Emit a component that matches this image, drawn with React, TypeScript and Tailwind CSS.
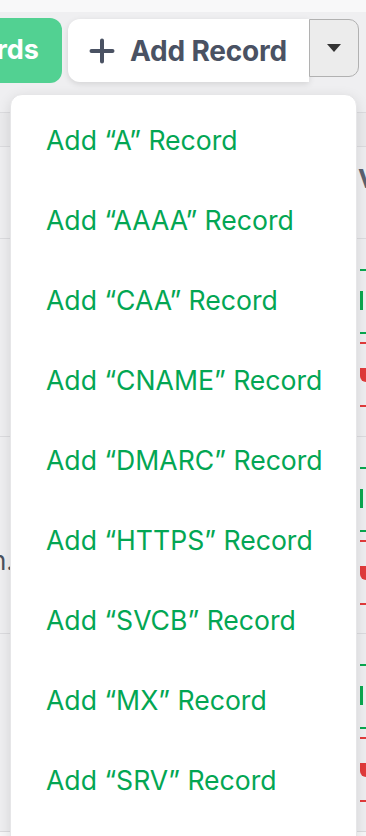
const RECORD_TYPES = ["A", "AAAA", "CAA", "CNAME", "DMARC", "HTTPS", "SVCB", "MX", "SRV"]

function PlusIcon() {
  return (
    <svg width="26" height="26" viewBox="0 0 26 26" fill="none">
      <path d="M13 2.5v21M2.5 13h21" stroke="#4a5263" strokeWidth="4" strokeLinecap="round" />
    </svg>
  )
}

function RowActions() {
  return (
    <div className="flex flex-col gap-[8px] pt-[30px] pl-[360px]">
      <div className="h-[65px] w-[40px] border-y-2 border-[#0aa950] pt-[20px]">
        <div className="w-[3px] h-[19px] bg-[#0aa950]" />
      </div>
      <div className="h-[65px] w-[40px] border-y-2 border-[#e23b3b] pt-[24px]">
        <div className="w-[8px] h-[14px] rounded-bl-[6px] bg-[#e23b3b]" />
      </div>
    </div>
  )
}

export default function App() {
  return (
    <div className="relative w-[366px] h-[836px] overflow-hidden bg-[#f8f8f9]" style={{ fontFamily: "Inter, 'Noto Sans', sans-serif" }}>
      {/* toolbar */}
      <div className="flex items-start gap-[6px] pt-[18px] h-[100px]">
        <div className="-ml-[84px] w-[146px] h-[65px] rounded-[12px] bg-[#52d192] flex items-center justify-end pr-[23px]">
          <span className="text-white font-bold text-[27px]">Records</span>
        </div>
        <div className="flex items-start mt-[1px]">
          <div className="w-[241px] h-[63px] bg-white rounded-l-[12px] shadow-[0_2px_6px_rgba(0,0,0,0.12)] flex items-center gap-[15px] pl-[21px]">
            <PlusIcon />
            <span className="text-[#4a5263] font-bold text-[28px] tracking-[-0.2px]">Add Record</span>
          </div>
          <div className="w-[50px] h-[58px] bg-[#ececec] border border-[#b1b1b1] rounded-r-[10px] flex items-center justify-center">
            <svg width="14" height="8" viewBox="0 0 14 8">
              <path d="M0 0h14L7 8z" fill="#333" />
            </svg>
          </div>
        </div>
      </div>

      {/* table behind the menu */}
      <div className="bg-[#efeff1] -mt-[88px] pt-[100px]">
        <div className="h-[35px] border-y border-[#dcdcdf] bg-[#ebebed]" />
        <div className="h-[92px] border-b border-[#dcdcdf] pl-[358px] pt-[12px]">
          <span className="text-[#5b6270] font-bold text-[26px]">Value</span>
        </div>
        <div className="h-[198px] border-b border-[#dcdcdf]">
          <RowActions />
        </div>
        <div className="relative h-[197px] border-b border-[#dcdcdf]">
          <span className="absolute -left-[9px] top-[104px] text-[#4b5260] text-[26px]">n.</span>
          <RowActions />
        </div>
        <div className="h-[198px] border-b border-[#dcdcdf]">
          <RowActions />
        </div>
      </div>

      {/* dropdown menu */}
      <div className="absolute left-[10px] top-[94px] w-[347px] h-[780px] bg-white rounded-[12px] border border-[#e6e6e8] shadow-[0_4px_14px_rgba(0,0,0,0.12)] pt-[6px]">
        {RECORD_TYPES.map((t) => (
          <div key={t} className="h-[80px] flex items-center pl-[35px]">
            <span className="text-[#03a653] text-[26.6px]">Add “{t}” Record</span>
          </div>
        ))}
      </div>
    </div>
  )
}
